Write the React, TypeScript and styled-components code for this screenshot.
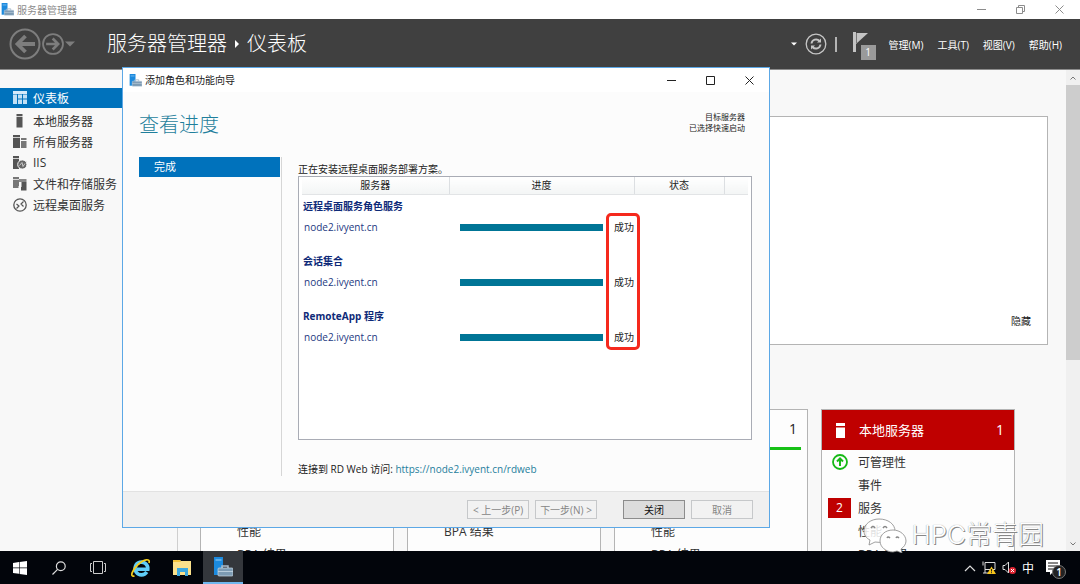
import React from 'react';
import styled, { createGlobalStyle, css } from 'styled-components';

const Global = createGlobalStyle`
  * { box-sizing: border-box; }
  body { margin: 0; overflow: hidden; font-family: "Open Sans", "Noto Sans CJK SC", sans-serif; color: #222; }
  button, input { font: inherit; color: inherit; }
  button { border: 0; padding: 0; background: none; display: flex; align-items: center; justify-content: center; }
  ul, h1, h2, p { margin: 0; padding: 0; list-style: none; font-weight: 400; }
  svg { display: block; flex: none; }
`;

const Desktop = styled.div`
  position: relative; display: flex; flex-direction: column; height: 100vh; overflow: hidden; background: #f8f8f8;
`;
const TitleBar = styled.header`
  display: flex; align-items: center; height: 19px; flex: none; padding: 0 16px 0 1px; background: #fff;
  color: #8c8c8c; font-size: 10px; line-height: 16px; gap: 3px;
`;
const WindowButtons = styled.div`
  margin-left: auto; display: flex; align-items: center; gap: 30px;
`;
const NavBar = styled.div`
  display: flex; align-items: center; height: 51px; flex: none; padding: 0 18px 0 9px; background: #404040; color: #fff;
  border-bottom: 1px solid #8c8c8c;
`;
const NavButtons = styled.div` display: flex; align-items: center; gap: 1px; width: 98px; `;
const Crumbs = styled.h1`
  display: flex; align-items: center; gap: 8px; font-size: 20px; line-height: 30px; font-weight: 300; white-space: nowrap;
`;
const Tools = styled.div` display: flex; align-items: center; margin-left: auto; gap: 8px; `;
const Divider = styled.span` width: 2px; height: 15px; background: #b4b4b4; `;
const FlagButton = styled.button` position: relative; width: 24px; height: 30px; margin: 0 4px 0 8px; `;
const FlagCount = styled.span`
  position: absolute; left: 8px; top: 16px; width: 15px; height: 15px; background: #9a9a9a; font-size: 10px; line-height: 15px; color: #fff;
`;
const Menus = styled.nav` display: flex; gap: 14px; font-size: 10px; white-space: nowrap; `;

const Body = styled.div` display: flex; flex: 1; min-height: 0; `;
const Sidebar = styled.ul` width: 178px; flex: none; padding-top: 18px; border-right: 1px solid #cfcfcf; `;
const SideItem = styled.li<{ $active?: boolean }>`
  a {
    display: flex; align-items: center; gap: 6px; height: ${p => (p.$active ? 20 : 21)}px; padding-left: 13px;
    font-size: 12px; color: #333; text-decoration: none;
  }
  ${p => p.$active && css` margin-bottom: 2px; background: #0072bc; a { color: #fff; } `}
`;
const Content = styled.main` flex: 1; min-width: 0; padding: 46px 18px 0 22px; overflow: hidden; `;
const Welcome = styled.section`
  display: flex; justify-content: flex-end; align-items: flex-end; height: 229px; padding: 0 16px 15px;
  background: #fff; border: 1px solid #b4b4b4; font-size: 10px; line-height: 16px;
`;
const Tiles = styled.div` display: flex; gap: 13px; margin-top: 64px; `;
const Tile = styled.section`
  width: 194px; height: 240px; flex: none; display: flex; flex-direction: column;
  background: #fdfdfd; border: 1px solid #b4b4b4;
`;
const TileHead = styled.div<{ $alert?: boolean }>`
  display: flex; align-items: center; height: 40px; flex: none; font-size: 14px; line-height: 20px;
  padding: 0 10px 0 14px;
  ${p => p.$alert ? css` background: #bf0000; color: #fff; ` : css` margin: 0 6px; padding: 0 4px; border-bottom: 3px solid #16c116; `}
`;
const TileName = styled.h2` font-size: 13px; line-height: 20px; margin-left: 14px; `;
const TileCount = styled.span` margin-left: auto; `;
const TileRows = styled.ul<{ $skip: number }>` padding-top: ${p => p.$skip * 23}px; `;
const TileRow = styled.li`
  display: grid; grid-template-columns: 23px 1fr; column-gap: 7px; align-items: center; justify-items: center;
  height: 23px; padding-left: 6px; font-size: 12px; color: #333;
  > :last-child { justify-self: start; }
`;
const AlertCount = styled.span`
  width: 23px; height: 20px; background: #bf0000; color: #fff; text-align: center; font-size: 12px; line-height: 20px;
`;
const Scrollbar = styled.div`
  width: 14px; flex: none; display: flex; flex-direction: column; align-items: stretch; background: #f0f0f0;
`;
const ScrollButton = styled.button` height: 15px; `;
const Track = styled.div` flex: 1; `;
const Thumb = styled.div` height: 61%; background: #cdcdcd; `;

const Dialog = styled.section`
  position: absolute; left: 122px; top: 67px; width: 648px; display: flex; flex-direction: column;
  background: #fcfcfc; border: 1px solid #5ca8e6; font-size: 10px;
`;
const DialogTitle = styled.header`
  display: flex; align-items: center; gap: 3px; height: 24px; padding: 0 15px 0 6px; background: #fff; line-height: 16px;
`;
const DialogHead = styled.div`
  display: flex; justify-content: space-between; align-items: flex-start; padding: 18px 24px 0 16px; height: 65px;
`;
const Heading = styled.h2` font-size: 20px; line-height: 30px; font-weight: 300; color: #1f7f9c; `;
const Target = styled.p` font-size: 8px; line-height: 11px; text-align: right; padding-top: 1px; `;
const DialogBody = styled.div` display: flex; height: 334px; padding: 0 17px 0 16px; `;
const Steps = styled.ul` width: 143px; flex: none; height: 319px; border-right: 1px solid #d6d6d6; padding-right: 1px; `;
const Step = styled.li` height: 20px; padding-left: 15px; font-size: 11px; line-height: 20px; color: #fff; background: #0072bc; `;
const Pane = styled.div` flex: 1; display: flex; flex-direction: column; padding-left: 16px; padding-top: 5px; `;
const PaneText = styled.p` line-height: 14px; white-space: nowrap; `;
const Grid = styled.div` height: 264px; background: #fff; border: 1px solid #a9acb5; padding: 0 3px; `;
const Table = styled.table`
  width: 100%; table-layout: fixed; border-collapse: collapse; line-height: 16px;
  th, td { padding: 0; text-align: left; }
  thead th {
    height: 17px; text-align: center; font-weight: 400; line-height: 16px; border-right: 1px solid #dcdfe2; border-bottom: 1px solid #e2e4e6;
    background: linear-gradient(#fff, #f3f5f5);
  }
  thead th:last-child { border-right: 0; }
`;
const ServerCol = styled.col` width: 147px; `;
const ProgressCol = styled.col` width: 185px; `;
const StateCol = styled.col` width: 90px; `;
const GroupRow = styled.tr` th { height: 23px; padding-left: 1px; color: #0e2a78; font-weight: 700; } `;
const ItemRow = styled.tr`
  height: 32px; vertical-align: top;
  td { padding-top: 2px; }
  td:first-child { padding-left: 2px; color: #24397f; }
`;
const Progress = styled.div` display: flex; align-items: center; gap: 11px; padding-left: 11px; white-space: nowrap; `;
const Bar = styled.span` width: 143px; height: 7px; background: #007596; `;
const Highlight = styled.div`
  position: absolute; left: 483px; top: 145px; width: 34px; height: 137px; border: 3px solid #f5291d; border-radius: 5px;
`;
const Access = styled.p` margin-top: 21px; line-height: 16px; a { color: #1f7f9c; text-decoration: none; } `;
const DialogFoot = styled.footer`
  display: flex; justify-content: flex-end; height: 36px; padding: 8px 16px 0 0; background: #f0f0f0; border-top: 1px solid #e2e2e2;
`;
const FootButton = styled.button<{ $main?: boolean; $gap?: number }>`
  width: 62px; height: 19px; margin-left: ${p => p.$gap ?? 6}px; white-space: nowrap;
  border: 1px solid ${p => (p.$main ? '#8c8c8c' : '#c6c8ca')}; background: ${p => (p.$main ? '#dcdcdc' : '#f2f2f2')};
  color: ${p => (p.$main ? '#111' : '#858585')};
`;

const Taskbar = styled.footer`
  display: flex; align-items: stretch; flex: none; height: 33px; background: #02050b; color: #fff;
`;
const TaskGroup = styled.div<{ $gap: number; $start: number }>`
  display: flex; gap: ${p => p.$gap}px; padding-left: ${p => p.$start}px;
`;
const TaskButton = styled.button<{ $active?: boolean; $narrow?: boolean }>`
  width: ${p => (p.$narrow ? 39 : 40)}px;
  ${p => p.$active && css` background: #34373c; border-bottom: 2px solid #6fb7ee; `}
`;
const Tray = styled.div` display: flex; align-items: center; margin-left: auto; gap: 6px; padding-right: 14px; font-size: 12px; `;
const Notice = styled.button` position: relative; width: 20px; height: 24px; margin-left: 6px; `;
const NoticeCount = styled.span`
  position: absolute; left: 6px; top: 9px; width: 14px; height: 14px; border-radius: 50%; border: 1px solid #777; background: #222;
  font-size: 10px; font-weight: 600; line-height: 12px; text-align: center;
`;
const Watermark = styled.div`
  position: absolute; right: 36px; bottom: 29px; display: flex; align-items: center; gap: 4px;
  font-family: Inter, "Noto Sans CJK SC", sans-serif;
  font-size: 26px; line-height: 40px; font-weight: 300; color: #fff; white-space: nowrap;
  text-shadow: 1px 1px 0 #888, 0 0 1px #888;
`;

const ServerLogo = ({ size = 13 }: { size?: number }) => (
  <svg width={size} height={size} viewBox="0 0 20 20">
    <rect x="1" y="0" width="9" height="18" fill="#1c8ade" />
    <path d="M2.500 3h6" stroke="#9fd2f7" strokeWidth="1" />
    <path d="M9 11V9h6v2" fill="none" stroke="#a9bccb" strokeWidth="1.500" />
    <rect x="5" y="11" width="15" height="8" rx="1" fill="#7d9bb3" stroke="#c8d8e4" strokeWidth=".7" />
    <path d="M5 14.500h15" stroke="#c8d8e4" strokeWidth=".8" />
  </svg>
);
const Minimize = () => <svg width="9" height="9" viewBox="0 0 9 9"><path d="M0 4.500h9" stroke="currentColor" /></svg>;
const Maximize = () => <svg width="9" height="9" viewBox="0 0 9 9"><path d="M.5.5h8v8h-8z" fill="none" stroke="currentColor" /></svg>;
const Restore = () => (
  <svg width="9" height="9" viewBox="0 0 9 9"><path d="M.5 2.500h6v6h-6zM2.500 2.500v-2h6v6h-2" fill="none" stroke="currentColor" /></svg>
);
const Close = () => <svg width="9" height="9" viewBox="0 0 9 9"><path d="M.5.5l8 8M8.500.5l-8 8" stroke="currentColor" /></svg>;
const Arrow = ({ size, back }: { size: number; back?: boolean }) => (
  <svg width={size} height={size} viewBox="0 0 32 32" fill="none" stroke="#7d7d7d" strokeWidth={back ? 2 : 2.6}>
    <circle cx="16" cy="16" r="14.500" />
    <path d={back ? 'M26 16H8M16.500 8l-8 8 8 8' : 'M6 16h18M15.500 8l8 8-8 8'} strokeWidth="3.800" />
  </svg>
);
const Caret = ({ size, color }: { size: number; color: string }) => (
  <svg width={size} height={size} viewBox="0 0 8 8"><path d="M0 2h8L4 6z" fill={color} /></svg>
);
const Refresh = () => (
  <svg width="22" height="22" viewBox="0 0 22 22" fill="none" stroke="#c6c6c6">
    <circle cx="11" cy="11" r="9.800" strokeWidth="1.300" />
    <path d="M6.500 10.500a4.600 4.600 0 0 1 8-2.500M15.500 11.500a4.600 4.600 0 0 1-8 2.500" strokeWidth="1.900" />
    <path d="M16 5.500v4h-4zM6 16.500v-4h4z" fill="#c6c6c6" stroke="none" />
  </svg>
);
const Flag = () => (
  <svg width="24" height="30" viewBox="0 0 24 30">
    <path d="M1.500 3v20" stroke="#c4c4c4" strokeWidth="3" /><path d="M3 4h12L3 15z" fill="#c4c4c4" /><path d="M3.500 4v10" stroke="#777" />
  </svg>
);

const SideIcon = ({ kind }: { kind: string }) => {
  const g = '#555';
  return (
    <svg width="14" height="14" viewBox="0 0 14 14">
      {kind === 'dash' && <><path d="M0 0h14v3H0z" fill="#d5eafa" /><path d="M0 3.500h4V13H0zM5 3.500h4v4H5zM10 3.500h4v4h-4zM5 8.500h4V13H5zM10 8.500h4V13h-4z" fill="#c2e0f5" /></>}
      {kind === 'local' && <><path d="M3.500 0h6v2.200h-6zM3.500 3h6v10.500h-6z" fill={g} /></>}
      {kind === 'all' && <><path d="M0 0h7v2H0zM0 2.800h7V13H0z" fill={g} /><path d="M8 3h5.500v2H8zM8 6h5.500v7H8z" fill="#777" /></>}
      {kind === 'iis' && <><path d="M0 0h6v2H0zM0 2.800h6V13H0z" fill={g} /><circle cx="9.300" cy="8.500" r="4.600" fill="#666" stroke="#f8f8f8" /><path d="M6.500 9.500l2.500-3 1 4 2-3" fill="none" stroke="#ddd" strokeWidth=".8" /></>}
      {kind === 'files' && <><path d="M0 0h6v2H0zM0 2.800h6V11H0z" fill="#777" /><path d="M6 2h7.500v3H6z" fill="#888" /><path d="M8 5h5.500v8.500H8z" fill={g} /><path d="M8 5v5H5" fill="none" stroke="#f8f8f8" /></>}
      {kind === 'remote' && <><circle cx="7" cy="7" r="6.200" fill="none" stroke={g} strokeWidth="1.300" /><path d="M3.500 6l2.500 2-2.500 2.500M10.500 3.500L8 6l2.500 2.500" fill="none" stroke={g} strokeWidth="1.200" /></>}
    </svg>
  );
};

const sideItems = [
  ['dash', '仪表板'], ['local', '本地服务器'], ['all', '所有服务器'], ['iis', 'IIS'], ['files', '文件和存储服务'], ['remote', '远程桌面服务'],
];
const groups = ['远程桌面服务角色服务', '会话集合', 'RemoteApp 程序'];

export default function App() {
  return (
    <Desktop>
      <Global />
      <TitleBar>
        <ServerLogo /><span>服务器管理器</span>
        <WindowButtons>
          <button aria-label="最小化"><Minimize /></button>
          <button aria-label="还原"><Restore /></button>
          <button aria-label="关闭"><Close /></button>
        </WindowButtons>
      </TitleBar>
      <NavBar>
        <NavButtons>
          <button aria-label="后退"><Arrow size={32} back /></button>
          <button aria-label="前进"><Arrow size={22} /></button>
          <button aria-label="历史"><Caret size={10} color="#7d7d7d" /></button>
        </NavButtons>
        <Crumbs>
          服务器管理器
          <svg width="4" height="8" viewBox="0 0 4 8"><path d="M0 0l4 4-4 4z" fill="#fff" /></svg>
          仪表板
        </Crumbs>
        <Tools>
          <Caret size={6} color="#fff" />
          <button aria-label="刷新"><Refresh /></button>
          <Divider />
          <FlagButton aria-label="通知"><Flag /><FlagCount>1</FlagCount></FlagButton>
          <Menus>
            <button>管理(M)</button><button>工具(T)</button><button>视图(V)</button><button>帮助(H)</button>
          </Menus>
        </Tools>
      </NavBar>
      <Body>
        <Sidebar>
          {sideItems.map(([kind, label], i) => (
            <SideItem key={kind} $active={i === 0}><a href="#"><SideIcon kind={kind} />{label}</a></SideItem>
          ))}
        </Sidebar>
        <Content>
          <Welcome>隐藏</Welcome>
          <Tiles>
            <Tile><TileHead /><TileRows $skip={3}>
              <TileRow><i /><span>性能</span></TileRow><TileRow><i /><span>BPA 结果</span></TileRow>
            </TileRows></Tile>
            <Tile><TileHead /><TileRows $skip={3}><TileRow><i /><span>BPA 结果</span></TileRow></TileRows></Tile>
            <Tile><TileHead><TileCount>1</TileCount></TileHead><TileRows $skip={3}>
              <TileRow><i /><span>性能</span></TileRow><TileRow><i /><span>BPA 结果</span></TileRow>
            </TileRows></Tile>
            <Tile>
              <TileHead $alert>
                <svg width="9" height="15" viewBox="0 0 9 15"><path d="M0 0h9v3H0zM0 4.500h9V15H0z" fill="#fff" /></svg>
                <TileName>本地服务器</TileName><TileCount>1</TileCount>
              </TileHead>
              <TileRows $skip={0}>
                <TileRow>
                  <svg width="16" height="16" viewBox="0 0 16 16" fill="none" stroke="#16b916">
                    <circle cx="8" cy="8" r="7" strokeWidth="1.800" /><path d="M8 12V5M5 7.500l3-3 3 3" strokeWidth="2" />
                  </svg>
                  <span>可管理性</span>
                </TileRow>
                <TileRow><i /><span>事件</span></TileRow>
                <TileRow><AlertCount>2</AlertCount><span>服务</span></TileRow>
                <TileRow><i /><span>性能</span></TileRow>
                <TileRow><i /><span>BPA 结果</span></TileRow>
              </TileRows>
            </Tile>
          </Tiles>
        </Content>
        <Scrollbar>
          <ScrollButton aria-label="向上滚动"><svg width="6" height="4" viewBox="0 0 6 4"><path d="M.5 3.500L3 1l2.500 2.500" fill="none" stroke="#777" /></svg></ScrollButton>
          <Track><Thumb /></Track>
          <ScrollButton aria-label="向下滚动"><svg width="6" height="4" viewBox="0 0 6 4"><path d="M.5.5L3 3 5.500.5" fill="none" stroke="#777" /></svg></ScrollButton>
        </Scrollbar>
      </Body>
      <Taskbar>
        <TaskGroup $gap={0} $start={0}>
          <TaskButton $narrow aria-label="开始"><svg width="14" height="14" viewBox="0 0 14 14"><path d="M0 2l6-.9v5.500H0zM6.600 1L14 0v6.600H6.600zM0 7.300h6v5.500L0 12zM6.600 7.300H14V14l-7.400-1z" fill="#fff" /></svg></TaskButton>
          <TaskButton $narrow aria-label="搜索"><svg width="14" height="14" viewBox="0 0 14 14" fill="none" stroke="#ddd" strokeWidth="1.200"><circle cx="8.800" cy="5.200" r="4.400" /><path d="M5.600 8.400L.5 13.500" /></svg></TaskButton>
          <TaskButton $narrow aria-label="任务视图"><svg width="16" height="14" viewBox="0 0 16 14" fill="none" stroke="#ccc"><path d="M3.500.5h9v12h-9zM2 2.500H.5v8H2M14 2.500h1.500v8H14" /></svg></TaskButton>
        </TaskGroup>
        <TaskGroup $gap={1} $start={4}>
          <TaskButton aria-label="Internet Explorer">
            <svg width="20" height="20" viewBox="0 0 20 20" fill="none">
              <path d="M15.800 14A6.400 6.400 0 1 1 16.800 11.200H6" stroke="#5fcdf7" strokeWidth="3.600" />
              <path d="M3.500 18C-1.500 19.500 1 12 7 6.500S19.500 0 18 5" stroke="#f4cd1d" strokeWidth="1.700" />
            </svg>
          </TaskButton>
          <TaskButton aria-label="文件资源管理器">
            <svg width="18" height="16" viewBox="0 0 18 16"><path d="M0 0h7l1 1h10v14H0z" fill="#fbe18b" /><path d="M0 0h7l1 2H0z" fill="#f2c33c" /><path d="M4 8h11v8h-3v-4H7v4H4z" fill="#3da9e0" /></svg>
          </TaskButton>
          <TaskButton $active aria-label="服务器管理器"><ServerLogo size={20} /></TaskButton>
        </TaskGroup>
        <Tray>
          <svg width="12" height="8" viewBox="0 0 12 8"><path d="M1 7l5-5 5 5" fill="none" stroke="#ddd" strokeWidth="1.200" /></svg>
          <svg width="14" height="14" viewBox="0 0 14 14"><path d="M3 1.500h10v7H3zM1 .5v4M3 8.500V12M1 12h6" fill="none" stroke="#ddd" /><path d="M9.500 5.500L14 13H5z" fill="#f7c51d" /><path d="M9.500 8v2.500M9.500 11.200v1" stroke="#222" /></svg>
          <svg width="14" height="14" viewBox="0 0 14 14"><path d="M1 4.500h2L6.500 1v11L3 8.500H1z" fill="none" stroke="#ddd" /><circle cx="10.500" cy="9.500" r="3.500" fill="#df2633" /><path d="M9 8l3 3M12 8l-3 3" stroke="#fff" /></svg>
          <span>中</span>
          <Notice aria-label="通知中心">
            <svg width="20" height="24" viewBox="0 0 20 24"><path d="M0 4h14v12H7l-3 3v-3H0z" fill="#fff" /><path d="M2 7h10M2 10h10M2 13h6" stroke="#111" /></svg>
            <NoticeCount>1</NoticeCount>
          </Notice>
        </Tray>
      </Taskbar>

      <Dialog role="dialog" aria-label="添加角色和功能向导">
        <DialogTitle>
          <ServerLogo /><span>添加角色和功能向导</span>
          <WindowButtons>
            <button aria-label="最小化"><Minimize /></button>
            <button aria-label="最大化"><Maximize /></button>
            <button aria-label="关闭"><Close /></button>
          </WindowButtons>
        </DialogTitle>
        <DialogHead>
          <Heading>查看进度</Heading>
          <Target>目标服务器<br />已选择快速启动</Target>
        </DialogHead>
        <DialogBody>
          <Steps><Step>完成</Step></Steps>
          <Pane>
            <PaneText>正在安装远程桌面服务部署方案。</PaneText>
            <Grid>
              <Table>
                <colgroup><ServerCol /><ProgressCol /><StateCol /><col /></colgroup>
                <thead><tr><th>服务器</th><th>进度</th><th>状态</th><th /></tr></thead>
                <tbody>
                  {groups.map(name => (
                    <React.Fragment key={name}>
                      <GroupRow><th colSpan={4} scope="rowgroup">{name}</th></GroupRow>
                      <ItemRow><td>node2.ivyent.cn</td><td colSpan={3}><Progress><Bar />成功</Progress></td></ItemRow>
                    </React.Fragment>
                  ))}
                </tbody>
              </Table>
            </Grid>
            <Access>连接到 RD Web 访问: <a href="#">https://node2.ivyent.cn/rdweb</a></Access>
          </Pane>
        </DialogBody>
        <DialogFoot>
          <FootButton disabled>&lt; 上一步(P)</FootButton>
          <FootButton disabled>下一步(N) &gt;</FootButton>
          <FootButton $main $gap={26}>关闭</FootButton>
          <FootButton disabled>取消</FootButton>
        </DialogFoot>
        <Highlight />
      </Dialog>

      <Watermark>
        <svg width="44" height="36" viewBox="0 0 44 36" fill="#fff" stroke="#888" strokeWidth=".8">
          <path d="M16 2C8 2 1 7 1 14c0 4 2 7 6 9l-1 5 6-3c13 2 20-4 20-11S25 2 16 2z" fillOpacity=".85" />
          <path d="M30 13c-8 0-13 5-13 11s6 11 13 11l4-1 5 2-1-4c3-2 5-5 5-8 0-6-6-11-13-11z" />
          <path d="M8 11q2-3 4 0M20 11q2-3 4 0M24 21q1-2 3 0M33 21q1-2 3 0" fill="none" strokeWidth="1.500" />
        </svg>
        HPC常青园
      </Watermark>
    </Desktop>
  );
}
